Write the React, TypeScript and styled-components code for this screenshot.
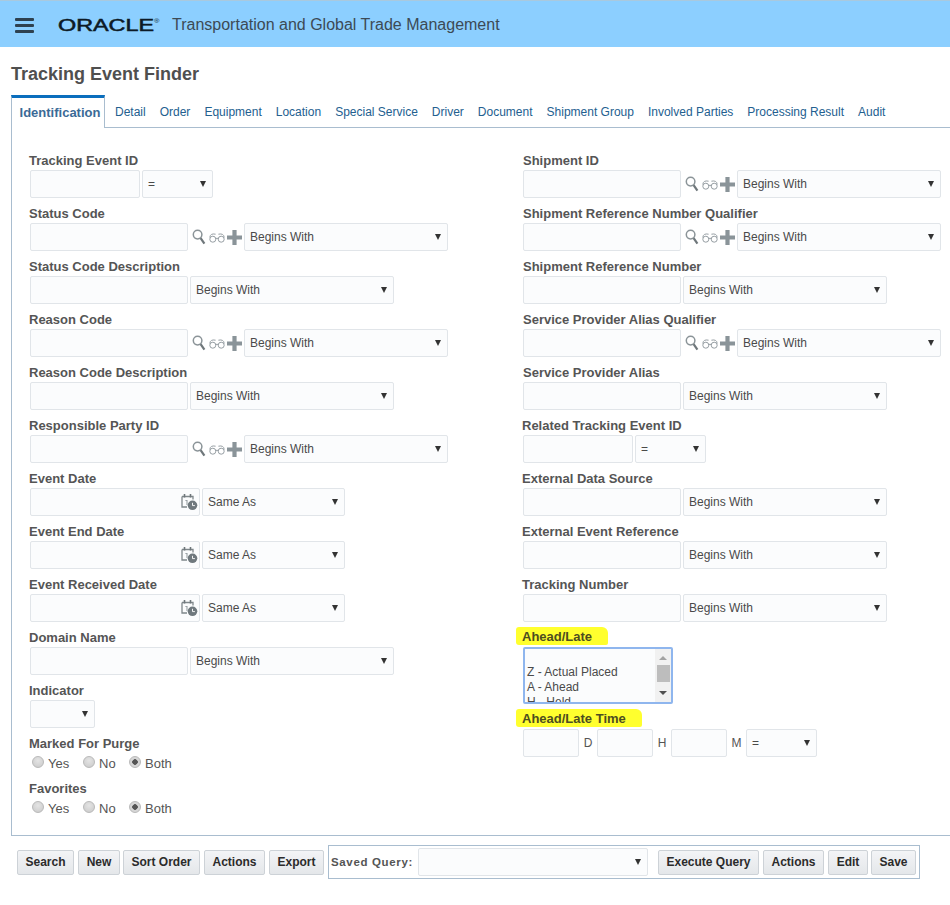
import React from "react";
import styled, { createGlobalStyle } from "styled-components";

const Global = createGlobalStyle`
  html, body { margin: 0; padding: 0; background: #fff; overflow: hidden; }
  body { font-family: "Liberation Sans", Arial, sans-serif; color: #4a4a4a; }
  * { box-sizing: border-box; }
`;

const Page = styled.div`width: 950px; height: 905px; overflow: hidden;`;

const Header = styled.header`
  height: 47px; background: #8ccfff; border-top: 1px solid #a9c9de;
  display: flex; align-items: center; padding: 2px 0 0 15px;
`;
const Burger = styled.div`
  width: 19px; height: 15px; display: flex; flex-direction: column; justify-content: space-between;
  & > span { display: block; height: 3px; background: #2e4150; border-radius: 1px; }
`;
const LogoText = styled.span`
  display: inline-block; margin: 1px 0 0 24px; width: 100px; height: 14px; line-height: 14px;
  font-size: 16px; font-weight: 400; color: #0c1a26; -webkit-text-stroke: 0.5px #0c1a26;
  transform: scaleX(1.46); transform-origin: left center; white-space: nowrap;
  & > sup { font-size: 5px; font-weight: 400; vertical-align: 8px; line-height: 0; -webkit-text-stroke: 0; }
`;
const AppName = styled.span`margin-left: 14px; font-size: 16px; color: #3c4a55; white-space: nowrap;`;

const Title = styled.h1`
  margin: 15px 0 9px 11px; height: 24px; line-height: 24px; font-size: 18px; font-weight: 700; color: #4f4f4f;
`;

const TabBar = styled.nav`
  margin-left: 11px; height: 33px; display: flex; align-items: stretch;
  border-bottom: 1px solid #a9bdcf;
`;
const ActiveTab = styled.div`
  width: 94px; height: 33px; border-top: 3px solid #0a6ebd; border-left: 1px solid #a9bdcf; border-right: 1px solid #a9bdcf;
  background: #fff; display: flex; align-items: center; justify-content: center; margin-right: 3px;
  font-size: 13px; font-weight: 700; color: #3b6a96; white-space: nowrap; padding: 0 0 1px 4px;
`;
const Tab = styled.a`
  padding: 1px 7px 0; display: flex; align-items: center; font-size: 12px; color: #23608f; white-space: nowrap;
`;

const Panel = styled.section`
  margin-left: 11px; height: 708px; border-left: 1px solid #a9bdcf; border-bottom: 1px solid #a9bdcf;
  display: grid; grid-template-columns: 493px 1fr; padding: 22px 0 0 17px;
`;
const Column = styled.div`display: flex; flex-direction: column; align-items: flex-start;`;

const Field = styled.div`margin-bottom: 5px;`;
const Label = styled.label<{ $nudge?: number }>`
  display: block; height: 20px; line-height: 21px; font-size: 13px; font-weight: 700; color: #555;
  margin-left: ${(p) => p.$nudge ?? 0}px; white-space: nowrap;
`;
const MarkedLabel = styled.span`
  display: inline-block; height: 18px; line-height: 20px; font-size: 13px; font-weight: 700; color: #4d4d20;
  background: #ffff2e; margin-left: -6px; padding: 0 16px 0 6px; border-radius: 3px 6px 2px 3px;
  position: relative; top: -1px;
`;
const Controls = styled.div`display: flex; align-items: center; height: 28px; margin-left: 1px;`;

const TextBox = styled.input<{ $w: number }>`
  width: ${(p) => p.$w}px; height: 28px; background: #fbfcfd; border: 1px solid #e1e5e9; border-radius: 2px;
  outline: none; padding: 0 5px; font: 12px "Liberation Sans", Arial, sans-serif;
`;
const SelectWrap = styled.div<{ $w: number; $gap?: number }>`
  position: relative; width: ${(p) => p.$w}px; height: 28px; margin-left: ${(p) => p.$gap ?? 2}px;
  &::after {
    content: ""; position: absolute; right: 7px; top: 11px; width: 0; height: 0;
    border-left: 3px solid transparent; border-right: 3px solid transparent; border-top: 6px solid #333;
  }
`;
const NativeSelect = styled.select`
  appearance: none; width: 100%; height: 100%; background: #fbfcfd; border: 1px solid #e1e5e9; border-radius: 2px;
  padding: 0 0 0 5px; outline: none; color: #4a4a4a; font: 12px "Liberation Sans", Arial, sans-serif;
`;
const IconGroup = styled.div`
  width: 50px; margin-left: 4px; display: flex; align-items: center; justify-content: space-between; height: 28px;
`;
const DateBox = styled.div`
  position: relative; width: 170px; height: 28px;
  & > svg { position: absolute; right: 2px; top: 5px; }
`;
const RadioRow = styled.div`
  display: flex; align-items: center; height: 20px; margin-left: 3px; font-size: 13px; color: #555;
`;
const RadioOption = styled.label<{ $w: number }>`
  display: flex; align-items: center; width: ${(p) => p.$w}px;
`;
const Radio = styled.input`
  appearance: none; width: 12px; height: 12px; margin: -3px 4px 0 0; border-radius: 50%;
  background: radial-gradient(circle at 50% 35%, #e4e4e4, #c9c9c9); border: 1px solid #b9b9b9;
  &:checked { background: radial-gradient(circle, #555 0 2.5px, #d6d6d6 3px); }
`;

const ListBox = styled.div`
  position: relative; width: 150px; height: 57px; margin-left: 1px; background: #fbfcfd; overflow: hidden;
  border: 2px solid #8fb6ee; border-radius: 2px; padding: 1px 0 0 2px;
`;
const ListOption = styled.div`height: 15px; line-height: 15px; font-size: 12px; color: #4a4a4a; white-space: nowrap;`;
const ScrollTrack = styled.div`
  position: absolute; right: 0; top: 0; bottom: 0; width: 16px; background: #f1f1f1;
  &::before {
    content: ""; position: absolute; left: 4px; top: 7px; border-left: 4px solid transparent; border-right: 4px solid transparent;
    border-bottom: 4px solid #a3a3a3;
  }
  &::after {
    content: ""; position: absolute; left: 4px; bottom: 7px; border-left: 4px solid transparent; border-right: 4px solid transparent;
    border-top: 4px solid #505050;
  }
`;
const ScrollThumb = styled.div`position: absolute; left: 2px; top: 16px; width: 13px; height: 17px; background: #bdbdbd;`;

const TimeUnit = styled.span<{ $w: number }>`
  width: ${(p) => p.$w}px; text-align: center; font-size: 12px; color: #555;
`;

const Footer = styled.footer`
  display: flex; align-items: center; margin-top: 9px; padding-left: 17px; height: 34px;
`;
const Button = styled.button<{ $w: number; $gap?: number }>`
  width: ${(p) => p.$w}px; height: 25px; margin-left: ${(p) => p.$gap ?? 4}px; padding: 0;
  background: linear-gradient(#f3f4f6, #e4e7ea); border: 1px solid #cdd2d7; border-radius: 2px;
  font: 700 12px "Liberation Sans", Arial, sans-serif; color: #2b2b2b;
`;
const SavedBox = styled.div`
  display: flex; align-items: center; width: 592px; height: 34px; margin-left: 4px; padding-left: 2px;
  border: 1px solid #a9bdcf;
`;
const SavedLabel = styled.span`
  width: 87px; font-size: 11.5px; font-weight: 700; color: #555; letter-spacing: 0.65px; white-space: nowrap;
`;

const Search = () => (
  <svg width="14" height="16" viewBox="0 0 14 16" fill="none">
    <circle cx="5.6" cy="5.6" r="4.3" stroke="#8b9498" strokeWidth="1.5" />
    <path d="M8.6 9.2 12.4 14.6" stroke="#6f777b" strokeWidth="2.2" />
  </svg>
);
const Glasses = () => (
  <svg width="16" height="11" viewBox="0 0 16 11" fill="none" stroke="#969ea3" strokeWidth="1">
    <circle cx="3.8" cy="7.2" r="3" />
    <circle cx="12.2" cy="7.2" r="3" />
    <path d="M6.8 6.6Q8 5.8 9.2 6.6M0.8 5.5Q1.2 1 6.6 2.2M15.2 5.5Q14.8 1 9.4 2.2" />
  </svg>
);
const Plus = () => (
  <svg width="15" height="15" viewBox="0 0 15 15">
    <path d="M5.4 0h4.2v5.4H15v4.2H9.6V15H5.4V9.6H0V5.4h5.4z" fill="#8a9499" />
  </svg>
);
const CalendarClock = () => (
  <svg width="17" height="18" viewBox="0 0 17 18" fill="none">
    <path d="M1 3.5h11v3M1 3.5V14h5" stroke="#7f878b" strokeWidth="1.3" />
    <path d="M3.5 1v3.5M9.5 1v3.5" stroke="#6f777b" strokeWidth="1.6" />
    <path d="M4.4 7.5h1.6V12" stroke="#9aa1a5" strokeWidth="1.1" />
    <circle cx="11.5" cy="12.3" r="4.8" fill="#6f787d" />
    <path d="M11.5 9.8v2.8h2.4" stroke="#fff" strokeWidth="0.9" />
  </svg>
);

const Sel = ({ w, value, gap }: { w: number; value: string; gap?: number }) => (
  <SelectWrap $w={w} $gap={gap}>
    <NativeSelect defaultValue={value}>
      <option>{value}</option>
    </NativeSelect>
  </SelectWrap>
);

const Lookup = () => (
  <IconGroup>
    <Search />
    <Glasses />
    <Plus />
  </IconGroup>
);

type Kind = "id" | "lookup" | "plain" | "date";

const Row = ({ label, kind, nudge }: { label: string; kind: Kind; nudge?: number }) => (
  <Field>
    <Label $nudge={nudge}>{label}</Label>
    <Controls>
      {kind === "id" && (
        <>
          <TextBox $w={110} />
          <Sel w={71} value="=" />
        </>
      )}
      {kind === "lookup" && (
        <>
          <TextBox $w={158} />
          <Lookup />
          <Sel w={204} value="Begins With" />
        </>
      )}
      {kind === "plain" && (
        <>
          <TextBox $w={158} />
          <Sel w={204} value="Begins With" />
        </>
      )}
      {kind === "date" && (
        <>
          <DateBox>
            <TextBox $w={170} />
            <CalendarClock />
          </DateBox>
          <Sel w={143} value="Same As" />
        </>
      )}
    </Controls>
  </Field>
);

const RadioGroup = ({ name }: { name: string }) => (
  <RadioRow>
    <RadioOption $w={51}><Radio type="radio" name={name} />Yes</RadioOption>
    <RadioOption $w={46}><Radio type="radio" name={name} />No</RadioOption>
    <RadioOption $w={50}><Radio type="radio" name={name} defaultChecked />Both</RadioOption>
  </RadioRow>
);

const tabs = ["Detail", "Order", "Equipment", "Location", "Special Service", "Driver", "Document", "Shipment Group", "Involved Parties", "Processing Result", "Audit"];

export default function App() {
  return (
    <Page>
      <Global />
      <Header>
        <Burger><span /><span /><span /></Burger>
        <LogoText>ORACLE<sup>®</sup></LogoText>
        <AppName>Transportation and Global Trade Management</AppName>
      </Header>
      <Title>Tracking Event Finder</Title>
      <TabBar>
        <ActiveTab>Identification</ActiveTab>
        {tabs.map((t) => <Tab key={t}>{t}</Tab>)}
      </TabBar>
      <Panel>
        <Column>
          <Row label="Tracking Event ID" kind="id" />
          <Row label="Status Code" kind="lookup" />
          <Row label="Status Code Description" kind="plain" />
          <Row label="Reason Code" kind="lookup" />
          <Row label="Reason Code Description" kind="plain" />
          <Row label="Responsible Party ID" kind="lookup" />
          <Row label="Event Date" kind="date" />
          <Row label="Event End Date" kind="date" />
          <Row label="Event Received Date" kind="date" />
          <Row label="Domain Name" kind="plain" />
          <Field>
            <Label>Indicator</Label>
            <Controls><Sel w={65} value="" gap={0} /></Controls>
          </Field>
          <Field>
            <Label>Marked For Purge</Label>
            <RadioGroup name="purge" />
          </Field>
          <Field>
            <Label>Favorites</Label>
            <RadioGroup name="fav" />
          </Field>
        </Column>
        <Column>
          <Row label="Shipment ID" kind="lookup" nudge={1} />
          <Row label="Shipment Reference Number Qualifier" kind="lookup" nudge={1} />
          <Row label="Shipment Reference Number" kind="plain" nudge={1} />
          <Row label="Service Provider Alias Qualifier" kind="lookup" nudge={1} />
          <Row label="Service Provider Alias" kind="plain" nudge={1} />
          <Row label="Related Tracking Event ID" kind="id" />
          <Row label="External Data Source" kind="plain" />
          <Row label="External Event Reference" kind="plain" />
          <Row label="Tracking Number" kind="plain" />
          <Field>
            <Label><MarkedLabel>Ahead/Late</MarkedLabel></Label>
            <ListBox role="listbox">
              <ListOption>&nbsp;</ListOption>
              <ListOption>Z - Actual Placed</ListOption>
              <ListOption>A - Ahead</ListOption>
              <ListOption>H - Held</ListOption>
              <ScrollTrack><ScrollThumb /></ScrollTrack>
            </ListBox>
          </Field>
          <Field>
            <Label><MarkedLabel>Ahead/Late Time</MarkedLabel></Label>
            <Controls>
              <TextBox $w={56} />
              <TimeUnit $w={18}>D</TimeUnit>
              <TextBox $w={56} />
              <TimeUnit $w={18}>H</TimeUnit>
              <TextBox $w={56} />
              <TimeUnit $w={19}>M</TimeUnit>
              <Sel w={71} value="=" gap={0} />
            </Controls>
          </Field>
        </Column>
      </Panel>
      <Footer>
        <Button $w={57} $gap={0}>Search</Button>
        <Button $w={42}>New</Button>
        <Button $w={77} $gap={3}>Sort Order</Button>
        <Button $w={61}>Actions</Button>
        <Button $w={55}>Export</Button>
        <SavedBox>
          <SavedLabel>Saved Query:</SavedLabel>
          <Sel w={230} value="" gap={0} />
          <Button $w={101} $gap={10}>Execute Query</Button>
          <Button $w={61}>Actions</Button>
          <Button $w={40}>Edit</Button>
          <Button $w={45} $gap={3}>Save</Button>
        </SavedBox>
      </Footer>
    </Page>
  );
}
